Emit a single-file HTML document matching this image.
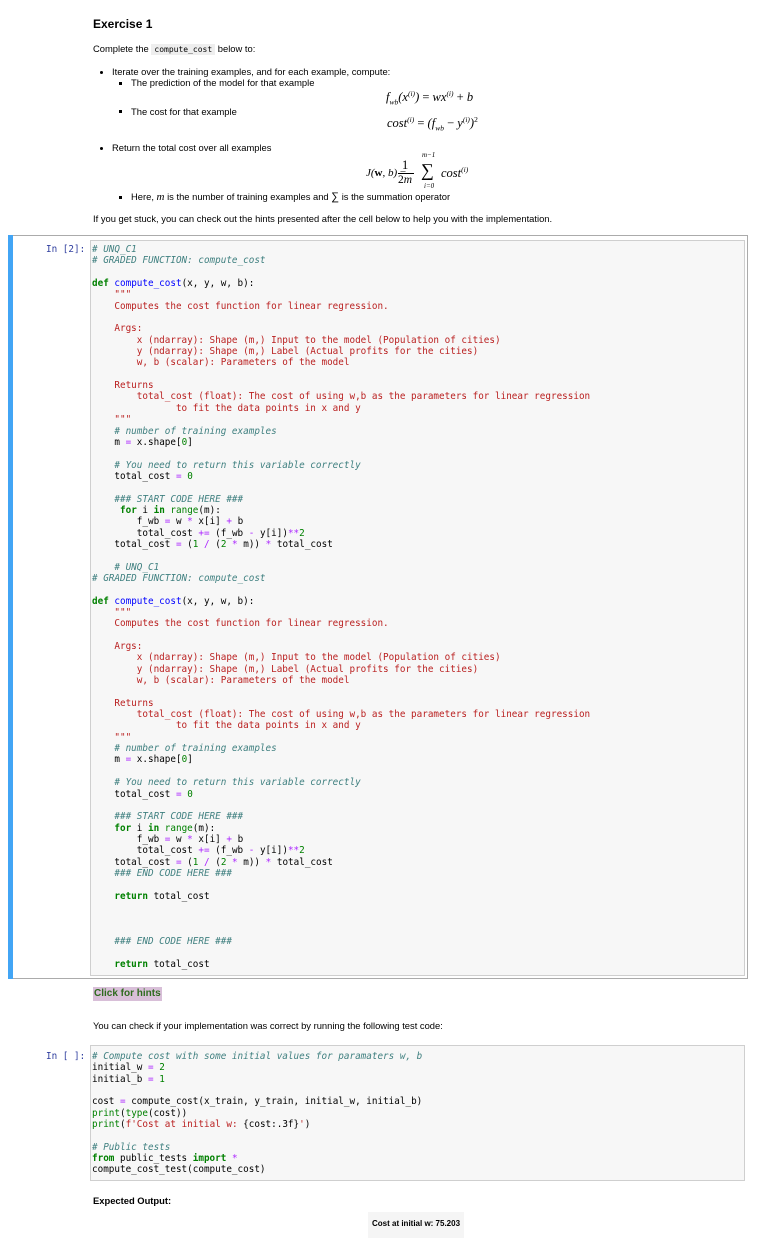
<!DOCTYPE html>
<html><head><meta charset="utf-8"><style>
*{margin:0;padding:0;box-sizing:border-box}
body{width:764px;height:1260px;background:#fff;position:relative;font-family:"Liberation Sans",sans-serif;color:#000;overflow:hidden}
.a{position:absolute;white-space:nowrap}
.t{font-size:9.4px}
.m{font-family:"Liberation Serif",serif;font-style:italic;font-size:12.5px}
pre.a{white-space:pre}
pre{font-family:"DejaVu Sans Mono",monospace;font-size:9.3px;line-height:11.35px;color:#000}
.c{color:#408080;font-style:italic}
.k{color:#008000;font-weight:bold}
.s{color:#BA2121}
.f{color:#0000FF}
.o{color:#AA22FF}
.n{color:#008000}
.b{color:#008000}
.bul{position:absolute;width:3px;height:3px;background:#000}
sub,sup{font-size:7.5px}
</style></head><body>
<div class="a" style="left:93px;top:17px;font-size:12px;font-weight:bold">Exercise 1</div>
<div class="a t" style="left:93px;top:43px">Complete the <span style="font-family:'DejaVu Sans Mono',monospace;font-size:8px;background:#eee;padding:1px 3px">compute_cost</span> below to:</div>
<div class="bul" style="left:100px;top:71px;border-radius:2px"></div>
<div class="a t" style="left:112px;top:66px">Iterate over the training examples, and for each example, compute:</div>
<div class="bul" style="left:119px;top:82px"></div>
<div class="a t" style="left:131px;top:77px">The prediction of the model for that example</div>
<div class="bul" style="left:119px;top:110px"></div>
<div class="a t" style="left:131px;top:106px">The cost for that example</div>
<div class="bul" style="left:100px;top:147px;border-radius:2px"></div>
<div class="a t" style="left:112px;top:142px">Return the total cost over all examples</div>
<div class="bul" style="left:119px;top:196px"></div>
<div class="a t" style="left:131px;top:191px">Here, <i style="font-family:'Liberation Serif',serif;font-size:11px">m</i> is the number of training examples and <span style="font-size:11px">∑</span> is the summation operator</div>
<div class="a t" style="left:93px;top:213px">If you get stuck, you can check out the hints presented after the cell below to help you with the implementation.</div>

<div class="a m" style="left:386px;top:89px">f<sub>wb</sub>(x<sup>(i)</sup>) <span style="font-style:normal">=</span> wx<sup>(i)</sup> <span style="font-style:normal">+</span> b</div>
<div class="a m" style="left:387px;top:115px">cost<sup>(i)</sup> <span style="font-style:normal">=</span> (f<sub>wb</sub> <span style="font-style:normal">−</span> y<sup>(i)</sup>)<sup style="font-style:normal">2</sup></div>
<div class="a m" style="left:366px;top:167px;font-size:11px">J(<b style="font-style:normal">w</b>, b) <span style="font-style:normal">=</span></div>
<div class="a m" style="left:402px;top:158px;font-style:normal">1</div>
<div class="a" style="left:398px;top:173px;width:16px;height:1px;background:#000"></div>
<div class="a m" style="left:398px;top:174px;font-size:11.5px"><span style="font-style:normal">2</span>m</div>
<div class="a" style="left:421px;top:160px;font-size:18px;font-family:'Liberation Serif',serif">∑</div>
<div class="a m" style="left:422px;top:151px;font-size:7px">m−1</div>
<div class="a m" style="left:424px;top:182px;font-size:7px">i=0</div>
<div class="a m" style="left:441px;top:165px">cost<sup>(i)</sup></div>

<div class="a" style="left:8px;top:235px;width:740px;height:744px;border:1px solid #ababab"></div>
<div class="a" style="left:8px;top:235px;width:5px;height:744px;background:#42A5F5"></div>
<div class="a" style="left:90px;top:240px;width:655px;height:736px;background:#f7f7f7;border:1px solid #cfcfcf"></div>
<pre class="a" style="left:46px;top:244px;color:#303F9F">In [2]:</pre>
<pre class="a" style="left:92px;top:244px"><span class="c"># UNQ_C1</span>
<span class="c"># GRADED FUNCTION: compute_cost</span>

<span class="k">def</span> <span class="f">compute_cost</span>(x, y, w, b):
    <span class="s">"""</span>
<span class="s">    Computes the cost function for linear regression.</span>

<span class="s">    Args:</span>
<span class="s">        x (ndarray): Shape (m,) Input to the model (Population of cities)</span>
<span class="s">        y (ndarray): Shape (m,) Label (Actual profits for the cities)</span>
<span class="s">        w, b (scalar): Parameters of the model</span>

<span class="s">    Returns</span>
<span class="s">        total_cost (float): The cost of using w,b as the parameters for linear regression</span>
<span class="s">               to fit the data points in x and y</span>
<span class="s">    """</span>
    <span class="c"># number of training examples</span>
    m <span class="o">=</span> x.shape[<span class="n">0</span>]

    <span class="c"># You need to return this variable correctly</span>
    total_cost <span class="o">=</span> <span class="n">0</span>

    <span class="c">### START CODE HERE ###</span>
     <span class="k">for</span> i <span class="k">in</span> <span class="b">range</span>(m):
        f_wb <span class="o">=</span> w <span class="o">*</span> x[i] <span class="o">+</span> b
        total_cost <span class="o">+=</span> (f_wb <span class="o">-</span> y[i])<span class="o">**</span><span class="n">2</span>
    total_cost <span class="o">=</span> (<span class="n">1</span> <span class="o">/</span> (<span class="n">2</span> <span class="o">*</span> m)) <span class="o">*</span> total_cost

    <span class="c"># UNQ_C1</span>
<span class="c"># GRADED FUNCTION: compute_cost</span>

<span class="k">def</span> <span class="f">compute_cost</span>(x, y, w, b):
    <span class="s">"""</span>
<span class="s">    Computes the cost function for linear regression.</span>

<span class="s">    Args:</span>
<span class="s">        x (ndarray): Shape (m,) Input to the model (Population of cities)</span>
<span class="s">        y (ndarray): Shape (m,) Label (Actual profits for the cities)</span>
<span class="s">        w, b (scalar): Parameters of the model</span>

<span class="s">    Returns</span>
<span class="s">        total_cost (float): The cost of using w,b as the parameters for linear regression</span>
<span class="s">               to fit the data points in x and y</span>
<span class="s">    """</span>
    <span class="c"># number of training examples</span>
    m <span class="o">=</span> x.shape[<span class="n">0</span>]

    <span class="c"># You need to return this variable correctly</span>
    total_cost <span class="o">=</span> <span class="n">0</span>

    <span class="c">### START CODE HERE ###</span>
    <span class="k">for</span> i <span class="k">in</span> <span class="b">range</span>(m):
        f_wb <span class="o">=</span> w <span class="o">*</span> x[i] <span class="o">+</span> b
        total_cost <span class="o">+=</span> (f_wb <span class="o">-</span> y[i])<span class="o">**</span><span class="n">2</span>
    total_cost <span class="o">=</span> (<span class="n">1</span> <span class="o">/</span> (<span class="n">2</span> <span class="o">*</span> m)) <span class="o">*</span> total_cost
    <span class="c">### END CODE HERE ###</span>

    <span class="k">return</span> total_cost



    <span class="c">### END CODE HERE ###</span>

    <span class="k">return</span> total_cost</pre>

<div class="a" style="left:93px;top:987px;background:#d8bfd8;color:#2e6b1e;font-weight:bold;font-size:10px;padding:1px 1px;height:14px;line-height:12px">Click for hints</div>
<div class="a t" style="left:93px;top:1020px">You can check if your implementation was correct by running the following test code:</div>

<div class="a" style="left:90px;top:1045px;width:655px;height:136px;background:#f7f7f7;border:1px solid #cfcfcf"></div>
<pre class="a" style="left:46px;top:1051px;color:#303F9F">In [ ]:</pre>
<pre class="a" style="left:92px;top:1051px"><span class="c"># Compute cost with some initial values for paramaters w, b</span>
initial_w <span class="o">=</span> <span class="n">2</span>
initial_b <span class="o">=</span> <span class="n">1</span>

cost <span class="o">=</span> compute_cost(x_train, y_train, initial_w, initial_b)
<span class="b">print</span>(<span class="b">type</span>(cost))
<span class="b">print</span>(<span class="s">f'Cost at initial w: </span>{cost:.3f}<span class="s">'</span>)

<span class="c"># Public tests</span>
<span class="k">from</span> public_tests <span class="k">import</span> <span class="o">*</span>
compute_cost_test(compute_cost)</pre>

<div class="a t" style="left:93px;top:1195px;font-weight:bold">Expected Output:</div>
<div class="a" style="left:368px;top:1212px;width:96px;height:26px;background:#f5f5f5"></div>
<div class="a" style="left:372px;top:1219px;font-size:8px;font-weight:bold">Cost at initial w: 75.203</div>
</body></html>
